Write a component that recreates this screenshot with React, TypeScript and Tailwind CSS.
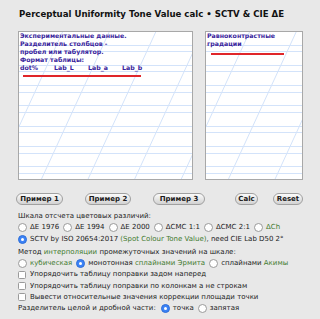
import React from "react";

const GREEN = "text-[#3f7a2e]";

function Paper({ w, h }: { w: number; h: number }) {
  const rows: number[] = [];
  for (let y = 12.5; y < h; y += 20.33) {
    rows.push(y);
    if (y + 6.6 < h) rows.push(y + 6.6);
  }
  const diags: number[] = [];
  for (let x = 22.5 - 46.6 * 2; x < w; x += 46.6) diags.push(x);
  return (
    <svg className="absolute inset-0" width={w} height={h}>
      {rows.map((y) => (
        <line key={"h" + y} x1={0} x2={w} y1={Math.round(y) + 0.5} y2={Math.round(y) + 0.5} stroke="#d3e3fa" strokeWidth={1} />
      ))}
      {diags.map((x) => (
        <line key={"d" + x} x1={x} y1={h} x2={x + 0.46 * h} y2={0} stroke="#d3e3fa" strokeWidth={1} />
      ))}
    </svg>
  );
}

function Radio({ on }: { on?: boolean }) {
  return on ? (
    <span className="inline-flex w-[9px] h-[9px] shrink-0 items-center justify-center rounded-full bg-[#3b82f6] border border-[#2f6fd8]">
      <span className="w-[3px] h-[3px] rounded-full bg-white" />
    </span>
  ) : (
    <span className="inline-block w-[9px] h-[9px] shrink-0 rounded-full bg-white border border-[#9a9a9a]" />
  );
}

function Check() {
  return <span className="inline-block w-[8px] h-[8px] shrink-0 rounded-[1.5px] bg-white border border-[#9a9a9a]" />;
}

function Btn({ w, ml, children }: { w: number; ml: string; children: React.ReactNode }) {
  return (
    <button
      className={`${ml} h-[12px] flex items-center justify-center rounded-full border border-[#a0a0a0] bg-gradient-to-b from-[#fbfbfb] to-[#d2d2d2] text-[7px] font-bold text-[#1a1a1a] leading-none`}
      style={{ width: w }}
    >
      {children}
    </button>
  );
}

export default function App() {
  return (
    <div className="w-[320px] h-[319px] overflow-hidden bg-[#e8e8e8] font-['DejaVu_Sans',sans-serif] text-[#222]">
      <h1 className="pt-[8px] pl-[19px] text-[8.6px] leading-[12px] font-bold text-[#111] whitespace-nowrap">
        Perceptual Uniformity Tone Value calc • SCTV &amp; CIE ΔE
      </h1>

      <div className="mt-[11px] flex pl-[18px] gap-[12px]">
        <div className="relative w-[175px] h-[149px] bg-white border border-[#a8a8a8] overflow-hidden">
          <Paper w={173} h={147} />
          <div className="relative pl-[1px] text-[6.25px] leading-[8px] font-bold text-[#3a1e9c] whitespace-nowrap">
            <div>Экспериментальные данные.</div>
            <div>Разделитель столбцов -</div>
            <div>пробел или табулятор.</div>
            <div>Формат таблицы:</div>
            <div className="flex">
              <span className="w-[34px]">dot%</span>
              <span className="w-[34px]">Lab_L</span>
              <span className="w-[34px]">Lab_a</span>
              <span>Lab_b</span>
            </div>
            <div className="mt-[3px] ml-[3px] w-[118px] h-[1.5px] bg-[#e0262a]" />
          </div>
        </div>
        <div className="relative w-[98px] h-[149px] bg-white border border-[#a8a8a8] overflow-hidden">
          <Paper w={96} h={147} />
          <div className="relative pl-[1px] text-[6.25px] leading-[8px] font-bold text-[#3a1e9c] whitespace-nowrap">
            <div>Равноконтрастные</div>
            <div>градации</div>
            <div className="mt-[5px] ml-[4px] w-[73px] h-[1.5px] bg-[#e0262a]" />
          </div>
        </div>
      </div>

      <div className="mt-[13px] flex pl-[16px]">
        <Btn w={47} ml="">Пример 1</Btn>
        <Btn w={46} ml="ml-[22px]">Пример 2</Btn>
        <Btn w={52} ml="ml-[22px]">Пример 3</Btn>
        <Btn w={23} ml="ml-[30px]">Calc</Btn>
        <Btn w={30} ml="ml-[15px]">Reset</Btn>
      </div>

      <div className="pl-[18px] mt-[6px] text-[7px] leading-[11.25px] whitespace-nowrap">
        <div>Шкала отсчета цветовых различий:</div>
        <div className="flex items-center">
          <Radio />
          <span className="ml-[3px] mr-[4px]">ΔE 1976</span>
          <Radio />
          <span className="ml-[3px] mr-[4px]">ΔE 1994</span>
          <Radio />
          <span className="ml-[3px] mr-[4px]">ΔE 2000</span>
          <Radio />
          <span className="ml-[3px] mr-[4px]">ΔCMC 1:1</span>
          <Radio />
          <span className="ml-[3px] mr-[4px]">ΔCMC 2:1</span>
          <Radio />
          <span className={`ml-[3px] ${GREEN}`}>ΔCh</span>
        </div>
        <div className="flex items-center">
          <Radio on />
          <span className="ml-[3px]">
            SCTV by ISO 20654:2017 <span className={GREEN}>(Spot Colour Tone Value)</span>, need CIE Lab D50 2°
          </span>
        </div>
        <div className="mt-[2px]">
          Метод <span className={GREEN}>интерполяции</span> промежуточных значений на шкале:
        </div>
        <div className="flex items-center">
          <Radio />
          <span className={`ml-[3px] mr-[4px] ${GREEN}`}>кубическая</span>
          <Radio on />
          <span className="ml-[3px] mr-[4px]">
            монотонная <span className={GREEN}>сплайнами Эрмита</span>
          </span>
          <Radio />
          <span className="ml-[3px]">
            сплайнами <span className={GREEN}>Акимы</span>
          </span>
        </div>
        <div className="flex items-center">
          <Check />
          <span className="ml-[4px]">Упорядочить таблицу поправки задом наперед</span>
        </div>
        <div className="flex items-center">
          <Check />
          <span className="ml-[4px]">Упорядочить таблицу поправки по колонкам а не строкам</span>
        </div>
        <div className="flex items-center">
          <Check />
          <span className="ml-[4px]">Вывести относительные значения коррекции площади точки</span>
        </div>
        <div className="flex items-center">
          <span className="mr-[5px]">Разделитель целой и дробной части:</span>
          <Radio on />
          <span className="ml-[3px] mr-[4px]">точка</span>
          <Radio />
          <span className="ml-[3px]">запятая</span>
        </div>
      </div>
    </div>
  );
}
